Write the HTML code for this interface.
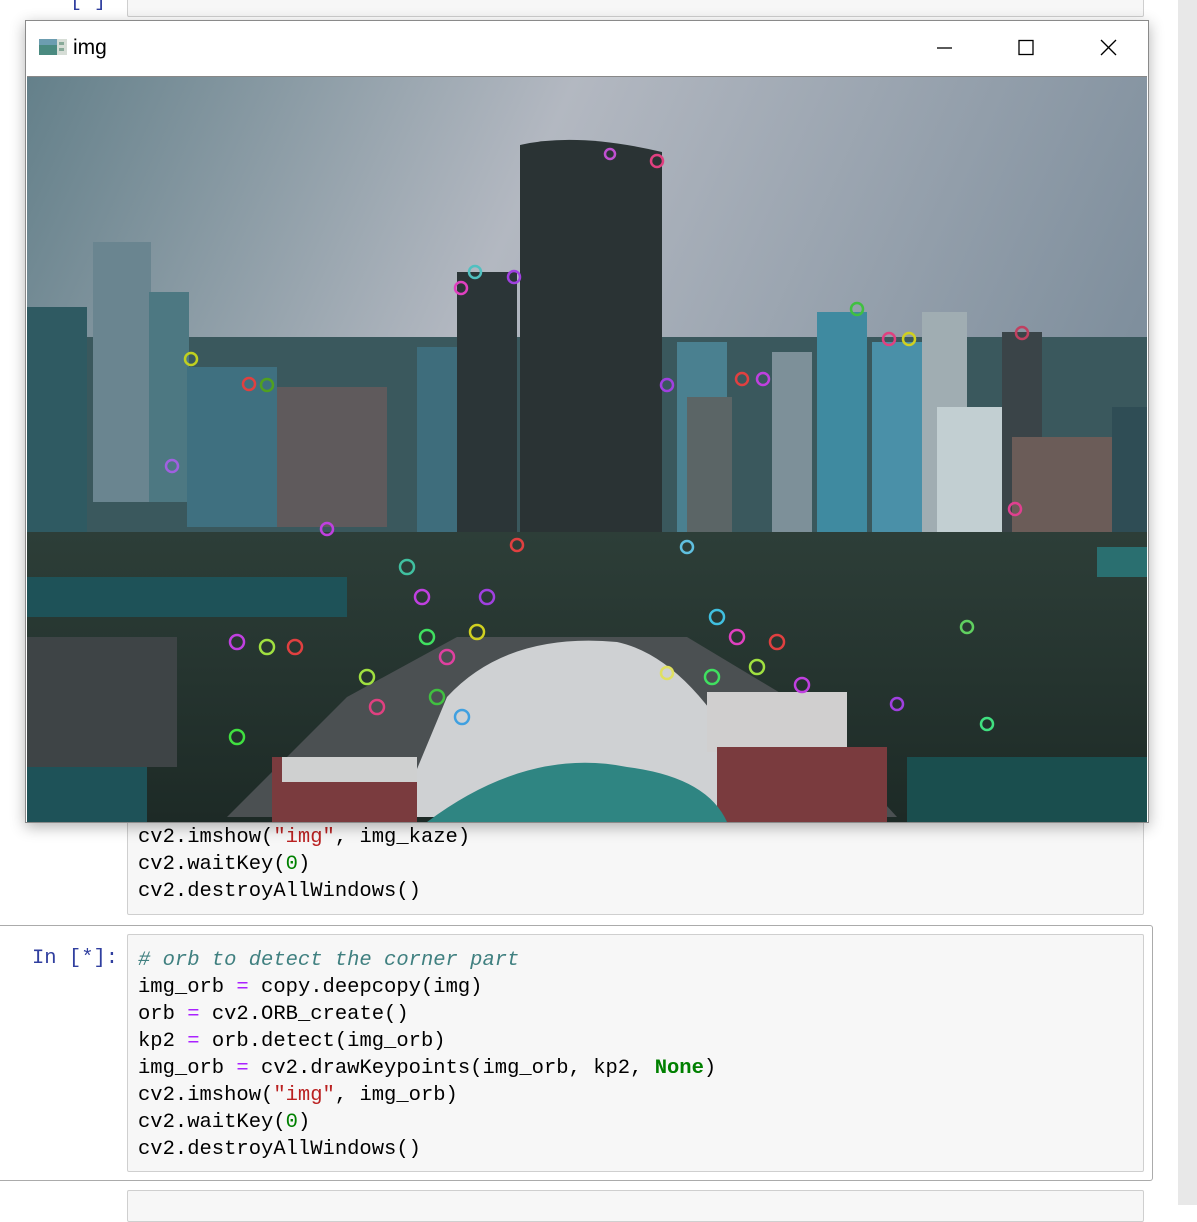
<!DOCTYPE html>
<html><head><meta charset="utf-8"><style>
body{margin:0;width:1197px;height:1205px;background:#fff;position:relative;overflow:hidden;font-family:"Liberation Sans",sans-serif}
.code{position:absolute;left:127px;width:1015px;background:#f7f7f7;border:1px solid #cfcfcf;border-radius:2px}
pre{margin:0;font-family:"Liberation Mono",monospace;font-size:20.5px;line-height:27px;color:#000;padding-left:10px}
.s{color:#ba2121}.n{color:#008000}.o{color:#aa22ff}.k{color:#008000;font-weight:bold}.c{color:#408080;font-style:italic}
.scroll{position:absolute;left:1178px;top:0;width:19px;height:1205px;background:#e8e8e8}
</style></head><body>
<div class="scroll"></div>
<div class="code" style="top:-4px;height:19px"></div>
<div style="position:absolute;left:70px;top:-10px;color:#303f9f;font-family:'Liberation Mono',monospace;font-size:20px">[ ]</div>
<div class="code" style="top:815px;height:98px"><pre style="padding-top:8px">cv2.imshow(<span class="s">"img"</span>, img_kaze)
cv2.waitKey(<span class="n">0</span>)
cv2.destroyAllWindows()</pre></div>
<div style="position:absolute;left:0;top:925px;width:1152px;height:254px;border:1px solid #ababab;border-left:none;border-radius:0 3px 3px 0"></div>
<div style="position:absolute;left:32px;top:947px;color:#303f9f;font-family:'Liberation Mono',monospace;font-size:20.5px">In [*]:</div>
<div class="code" style="top:934px;height:236px"><pre style="padding-top:12px"><span class="c"># orb to detect the corner part</span>
img_orb <span class="o">=</span> copy.deepcopy(img)
orb <span class="o">=</span> cv2.ORB_create()
kp2 <span class="o">=</span> orb.detect(img_orb)
img_orb <span class="o">=</span> cv2.drawKeypoints(img_orb, kp2, <span class="k">None</span>)
cv2.imshow(<span class="s">"img"</span>, img_orb)
cv2.waitKey(<span class="n">0</span>)
cv2.destroyAllWindows()</pre></div>
<div class="code" style="top:1190px;height:30px"></div>

<div style="position:absolute;left:25px;top:20px;width:1122px;height:801px;background:#fff;border:1px solid #8a8a8a;box-shadow:0 4px 14px rgba(0,0,0,.3)">
 <svg style="position:absolute;left:13px;top:16px" width="28" height="20"><rect x="0" y="2" width="18" height="16" fill="#4a8a80"/><rect x="0" y="2" width="18" height="6" fill="#6c9db0"/><rect x="18" y="2" width="10" height="16" fill="#d6ddd6"/><rect x="20" y="5" width="5" height="3" fill="#8a9"/><rect x="20" y="11" width="5" height="3" fill="#8a9"/></svg>
 <div style="position:absolute;left:47px;top:15px;font-size:21px;color:#000">img</div>
 <svg style="position:absolute;left:905px;top:14px" width="200" height="26" stroke="#000" stroke-width="1.3" fill="none"><line x1="6" y1="13" x2="21" y2="13"/><rect x="88" y="5.5" width="14" height="14"/><line x1="170" y1="5" x2="185" y2="20"/><line x1="185" y1="5" x2="170" y2="20"/></svg>
 <svg style="position:absolute;left:1px;top:55px;border-top:1px solid #888" width="1120" height="745" viewBox="0 0 1120 745">
  <defs><linearGradient id="sky" x1="0" y1="0" x2="1" y2="0.3"><stop offset="0" stop-color="#64808a"/><stop offset=".45" stop-color="#b3b8c1"/><stop offset="1" stop-color="#7f8f9d"/></linearGradient>
  <linearGradient id="gr" x1="0" y1="0" x2="0" y2="1"><stop offset="0" stop-color="#2d3e38"/><stop offset="1" stop-color="#1d2a26"/></linearGradient></defs>
  <rect width="1120" height="745" fill="url(#sky)"/>
  <rect x="0" y="260" width="1120" height="270" fill="#3a585d"/>
  <rect x="0" y="230" width="60" height="300" fill="#2f5a62"/>
  <rect x="66" y="165" width="58" height="260" fill="#6a8590"/>
  <rect x="122" y="215" width="40" height="210" fill="#4d7882"/>
  <rect x="160" y="290" width="90" height="160" fill="#3f7080"/>
  <rect x="250" y="310" width="110" height="140" fill="#5f5a5c"/>
  <rect x="390" y="270" width="40" height="200" fill="#3e6d7c"/>
  <rect x="430" y="195" width="60" height="290" fill="#2b3537"/>
  <path d="M493 68 Q550 55 635 75 L635 490 L493 490Z" fill="#2a3334"/>
  <rect x="650" y="265" width="50" height="200" fill="#4a8090"/>
  <rect x="660" y="320" width="45" height="140" fill="#5b6566"/>
  <rect x="745" y="275" width="40" height="200" fill="#7d9099"/>
  <rect x="790" y="235" width="50" height="230" fill="#3f8aa0"/>
  <rect x="845" y="265" width="50" height="210" fill="#4a90a8"/>
  <rect x="895" y="235" width="45" height="250" fill="#a0adb2"/>
  <rect x="910" y="330" width="75" height="130" fill="#c2cfd2"/>
  <rect x="975" y="255" width="40" height="200" fill="#3a4448"/>
  <rect x="985" y="360" width="100" height="100" fill="#6b5c58"/>
  <rect x="1085" y="330" width="35" height="140" fill="#2f4d55"/>
  <rect x="0" y="455" width="1120" height="290" fill="url(#gr)"/>
  <rect x="0" y="500" width="320" height="40" fill="#1e5258"/>
  <rect x="1070" y="470" width="50" height="30" fill="#2a6f70"/>
  <rect x="0" y="560" width="150" height="130" fill="#3e4446"/>
  <path d="M200 740 L320 620 L430 560 L660 560 L760 620 L870 740Z" fill="#4b5052"/>
  <path d="M370 740 L420 620 Q480 555 590 565 Q660 580 720 690 L740 740Z" fill="#cfd1d3"/>
  <rect x="680" y="615" width="140" height="60" fill="#d0cfcf"/>
  <rect x="690" y="670" width="170" height="75" fill="#7a3b3e"/>
  <rect x="245" y="680" width="145" height="65" fill="#7a3b3e"/>
  <rect x="255" y="680" width="135" height="25" fill="#cfd0d0"/>
  <path d="M400 745 Q500 670 600 690 Q680 700 700 745Z" fill="#2f8582"/>
  <rect x="880" y="680" width="240" height="65" fill="#1a4e4e"/>
  <rect x="0" y="690" width="120" height="55" fill="#1e5258"/>
  <g fill="none" stroke-width="2.5">
   <circle cx="583" cy="77" r="5" stroke="#c050d0"/><circle cx="630" cy="84" r="6" stroke="#e04080"/>
   <circle cx="448" cy="195" r="6" stroke="#50c0c0"/><circle cx="487" cy="200" r="6" stroke="#a040e0"/><circle cx="434" cy="211" r="6" stroke="#e040c0"/>
   <circle cx="164" cy="282" r="6" stroke="#c0d020"/><circle cx="222" cy="307" r="6" stroke="#e04040"/><circle cx="240" cy="308" r="6" stroke="#50a020"/>
   <circle cx="145" cy="389" r="6" stroke="#a060e0"/><circle cx="830" cy="232" r="6" stroke="#40c040"/><circle cx="862" cy="262" r="6" stroke="#e04080"/>
   <circle cx="882" cy="262" r="6" stroke="#d0d020"/><circle cx="995" cy="256" r="6" stroke="#c04060"/><circle cx="715" cy="302" r="6" stroke="#e04040"/>
   <circle cx="736" cy="302" r="6" stroke="#c040e0"/><circle cx="640" cy="308" r="6" stroke="#a040e0"/><circle cx="988" cy="432" r="6" stroke="#e04090"/>
   <circle cx="210" cy="565" r="7" stroke="#c040e0"/><circle cx="240" cy="570" r="7" stroke="#a0e040"/><circle cx="268" cy="570" r="7" stroke="#e04040"/>
   <circle cx="380" cy="490" r="7" stroke="#40c0a0"/><circle cx="395" cy="520" r="7" stroke="#c040e0"/><circle cx="400" cy="560" r="7" stroke="#40e060"/>
   <circle cx="420" cy="580" r="7" stroke="#e040a0"/><circle cx="450" cy="555" r="7" stroke="#d0d020"/><circle cx="460" cy="520" r="7" stroke="#a040e0"/>
   <circle cx="410" cy="620" r="7" stroke="#40c040"/><circle cx="350" cy="630" r="7" stroke="#e04080"/><circle cx="340" cy="600" r="7" stroke="#a0e040"/>
   <circle cx="435" cy="640" r="7" stroke="#40a0e0"/><circle cx="210" cy="660" r="7" stroke="#40e040"/><circle cx="690" cy="540" r="7" stroke="#40c0e0"/>
   <circle cx="710" cy="560" r="7" stroke="#e040c0"/><circle cx="730" cy="590" r="7" stroke="#a0e040"/><circle cx="750" cy="565" r="7" stroke="#e04040"/>
   <circle cx="685" cy="600" r="7" stroke="#40e060"/><circle cx="775" cy="608" r="7" stroke="#c040e0"/><circle cx="940" cy="550" r="6" stroke="#60d060"/>
   <circle cx="870" cy="627" r="6" stroke="#a040e0"/><circle cx="960" cy="647" r="6" stroke="#40e080"/><circle cx="660" cy="470" r="6" stroke="#60c0e0"/>
   <circle cx="640" cy="596" r="6" stroke="#e0e060"/><circle cx="490" cy="468" r="6" stroke="#e04040"/><circle cx="300" cy="452" r="6" stroke="#c040e0"/>
  </g>
 </svg>
</div>
</body></html>
